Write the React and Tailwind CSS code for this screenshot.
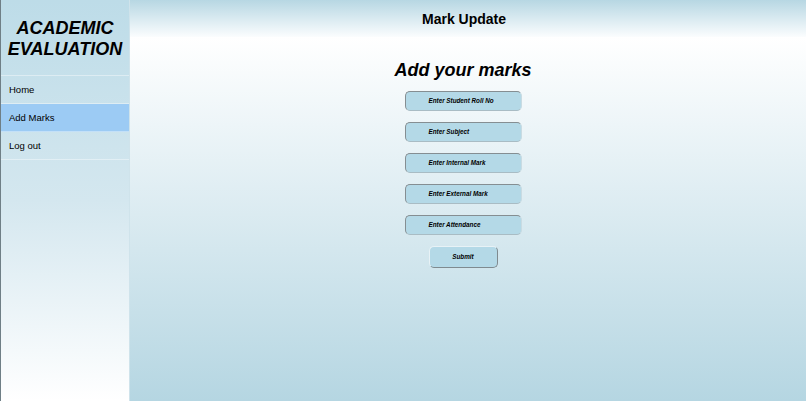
import React from "react";

const fields = [
  "Enter Student Roll No",
  "Enter Subject",
  "Enter Internal Mark",
  "Enter External Mark",
  "Enter Attendance",
];

export default function App() {
  return (
    <div
      className="flex h-[401px] w-[806px] overflow-hidden"
      style={{ fontFamily: '"Liberation Sans", Arial, sans-serif' }}
    >
      <aside className="flex w-[129px] shrink-0 flex-col border-l border-l-[#6f7f86] bg-gradient-to-b from-[#bddce8] via-[#d4e7ef] to-[#ffffff]">
        <div className="flex h-[76px] flex-col items-center justify-center border-b border-white/40 pt-[3px]">
          <h1 className="text-center text-[18px] font-bold italic leading-[21px] text-black">
            ACADEMIC
            <br />
            EVALUATION
          </h1>
        </div>
        <nav className="flex flex-col">
          <a className="flex h-[28px] items-center border-b border-white/40 pl-[8px] pt-[1px] text-[9.5px] text-black">
            Home
          </a>
          <a className="flex h-[28px] items-center border-b border-white/40 bg-[#9ccbf4] pl-[8px] pt-[1px] text-[9.5px] text-black">
            Add Marks
          </a>
          <a className="flex h-[28px] items-center border-b border-white/40 pl-[8px] pt-[1px] text-[9.5px] text-black">
            Log out
          </a>
        </nav>
      </aside>
      <main className="flex flex-1 flex-col border-l border-l-[#cfe3eb]">
        <header className="flex h-[37px] items-center justify-center bg-gradient-to-b from-[#b7d7e3] to-[#fbfdfe] pr-[8px] pt-[2px]">
          <span className="text-[14px] font-bold text-black">Mark Update</span>
        </header>
        <section className="flex flex-1 flex-col items-center bg-gradient-to-b from-[#ffffff] to-[#b5d6e2] pr-[10px]">
          <h2 className="mt-[21px] text-[18px] font-bold italic leading-[24px] text-black">
            Add your marks
          </h2>
          <div className="mt-[9px] flex flex-col gap-[11px]">
            {fields.map((f) => (
              <div
                key={f}
                className="flex h-[20px] w-[117px] items-center rounded-[5px] border-[1.5px] border-t-[#858e92] border-l-[#858e92] border-r-[#c9dbe2] border-b-[#a9bcc4] bg-[#b4d9e7] pl-[23px] text-[6.3px] font-bold italic text-black"
              >
                {f}
              </div>
            ))}
          </div>
          <button className="mt-[11px] flex h-[22px] w-[69px] items-center justify-center rounded-[5px] border-[1.5px] border-t-[#e8f2f6] border-l-[#e8f2f6] border-r-[#7f8a8f] border-b-[#7f8a8f] bg-[#b4d9e7] text-[6.3px] font-bold italic text-black">
            Submit
          </button>
        </section>
      </main>
    </div>
  );
}
